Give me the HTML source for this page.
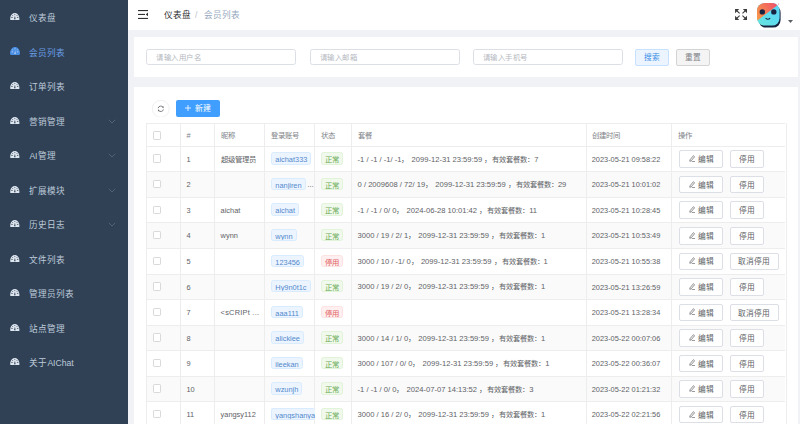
<!DOCTYPE html><html lang="zh-CN"><head><meta charset="utf-8"><style>
*{margin:0;padding:0;box-sizing:border-box}
html,body{width:800px;height:424px;overflow:hidden;background:#f0f2f5;font-family:"Liberation Sans", sans-serif;}
.abs{position:absolute}
.side{position:absolute;left:0;top:0;width:127.5px;height:424px;background:#304156}
.mi{position:absolute;left:0;width:127.5px;height:34.5px;}
.mt{position:absolute;left:29.4px;font-size:8.6px;line-height:10px;color:#bfcbd9;white-space:nowrap}
.hdr{position:absolute;left:127.5px;top:0;width:672.5px;height:30px;background:#fff;}
.card{position:absolute;left:134.4px;width:663.6px;background:#fff}
.inp{position:absolute;top:48.5px;height:16.8px;width:150px;border:0.6px solid #dcdfe6;border-radius:2.5px;background:#fff}
.ph{position:absolute;left:9.3px;top:3.4px;font-size:7.4px;letter-spacing:0.45px;line-height:9px;color:#b4b8c0;white-space:nowrap}
.btn{position:absolute;height:17px;border-radius:2px;font-size:7.4px;line-height:9px;text-align:center;white-space:nowrap}
.vl{position:absolute;width:0.6px;background:#ededed}
.hl{position:absolute;height:0.6px;background:#ededed}
.ct{position:absolute;font-size:7.4px;line-height:9px;color:#606266;white-space:nowrap}
.th{position:absolute;font-size:7.4px;line-height:9px;color:#808388;letter-spacing:0.2px;white-space:nowrap}
.tag{position:absolute;height:12.3px;border:0.6px solid;border-radius:2.5px;font-size:7.4px;line-height:13.6px;padding:0 3px;white-space:nowrap;overflow:hidden}
.tb{background:#ecf5ff;border-color:#d9ecff;color:#5288cc}
.tg{background:#f0f9eb;border-color:#e1f3d8;color:#6aaa58}
.tr{background:#fef0f0;border-color:#fde2e2;color:#e26464}
.ob{position:absolute;height:17.6px;border:0.6px solid #dcdfe6;border-radius:2px;background:#fff;font-size:7.7px;line-height:16px;color:#606266;text-align:center;white-space:nowrap}
.cb{position:absolute;width:8.4px;height:8.4px;border:0.6px solid #d9d9d9;border-radius:1.2px;background:#fff}
</style></head><body>

<div class="side">
<div class="mi" style="top:0.0px">
<svg style="position:absolute;left:10.3px;top:13.1px" width="9.6" height="7.1" viewBox="0 0 10 7.2">
<path d="M0.3 7.1 C-0.2 3.2 2 0 5 0 C8 0 10.2 3.2 9.7 7.1 Z" fill="#dde5ef"/>
<g stroke="#304156" stroke-width="0.8" fill="none"><path d="M1.2 4.4 L2.8 4.6 M7.2 4.6 L8.8 4.4 M2.2 2.0 L3.0 2.8 M7.8 2.0 L7.0 2.8 M5 0.8 L5 1.9"/></g>
<path d="M4.2 6.5 L5.8 6.5 L5.2 2.6 Z" fill="#304156"/>
</svg>
<div class="mt" style="top:13.3px;color:#bfcbd9">仪表盘</div>
</div>
<div class="mi" style="top:34.5px">
<svg style="position:absolute;left:10.2px;top:12.3px" width="10" height="8.6" viewBox="0 0 10 8.6"><path d="M0.2 7.6 C-0.6 3.5 2 0 5 0 C8 0 10.6 3.5 9.8 7.6 C8 8.8 2 8.8 0.2 7.6 Z" fill="#4a8fe6"/><g stroke="#c8dcf5" stroke-width="0.8" fill="none"><path d="M1.6 4.8 L3 5 M7 5 L8.4 4.8 M2.4 2.6 L3.2 3.3 M7.6 2.6 L6.8 3.3 M5 1.3 L5 2.4"/></g><path d="M4.3 7 L5.7 7 L5.2 3.2 Z" fill="#c8dcf5"/></svg>
<div class="mt" style="top:13.3px;color:#6a9fe6">会员列表</div>
</div>
<div class="mi" style="top:69.0px">
<svg style="position:absolute;left:10.3px;top:13.1px" width="9.6" height="7.1" viewBox="0 0 10 7.2">
<path d="M0.3 7.1 C-0.2 3.2 2 0 5 0 C8 0 10.2 3.2 9.7 7.1 Z" fill="#dde5ef"/>
<g stroke="#304156" stroke-width="0.8" fill="none"><path d="M1.2 4.4 L2.8 4.6 M7.2 4.6 L8.8 4.4 M2.2 2.0 L3.0 2.8 M7.8 2.0 L7.0 2.8 M5 0.8 L5 1.9"/></g>
<path d="M4.2 6.5 L5.8 6.5 L5.2 2.6 Z" fill="#304156"/>
</svg>
<div class="mt" style="top:13.3px;color:#bfcbd9">订单列表</div>
</div>
<div class="mi" style="top:103.5px">
<svg style="position:absolute;left:10.3px;top:13.1px" width="9.6" height="7.1" viewBox="0 0 10 7.2">
<path d="M0.3 7.1 C-0.2 3.2 2 0 5 0 C8 0 10.2 3.2 9.7 7.1 Z" fill="#dde5ef"/>
<g stroke="#304156" stroke-width="0.8" fill="none"><path d="M1.2 4.4 L2.8 4.6 M7.2 4.6 L8.8 4.4 M2.2 2.0 L3.0 2.8 M7.8 2.0 L7.0 2.8 M5 0.8 L5 1.9"/></g>
<path d="M4.2 6.5 L5.8 6.5 L5.2 2.6 Z" fill="#304156"/>
</svg>
<div class="mt" style="top:13.3px;color:#bfcbd9">营销管理</div>
<svg style="position:absolute;left:107.5px;top:15px" width="8" height="5" viewBox="0 0 8 5"><path d="M0.8 0.8 L4 4 L7.2 0.8" fill="none" stroke="#bfcbd9" stroke-opacity="0.35" stroke-width="0.7"/></svg>
</div>
<div class="mi" style="top:138.0px">
<svg style="position:absolute;left:10.3px;top:13.1px" width="9.6" height="7.1" viewBox="0 0 10 7.2">
<path d="M0.3 7.1 C-0.2 3.2 2 0 5 0 C8 0 10.2 3.2 9.7 7.1 Z" fill="#dde5ef"/>
<g stroke="#304156" stroke-width="0.8" fill="none"><path d="M1.2 4.4 L2.8 4.6 M7.2 4.6 L8.8 4.4 M2.2 2.0 L3.0 2.8 M7.8 2.0 L7.0 2.8 M5 0.8 L5 1.9"/></g>
<path d="M4.2 6.5 L5.8 6.5 L5.2 2.6 Z" fill="#304156"/>
</svg>
<div class="mt" style="top:13.3px;color:#bfcbd9">AI管理</div>
<svg style="position:absolute;left:107.5px;top:15px" width="8" height="5" viewBox="0 0 8 5"><path d="M0.8 0.8 L4 4 L7.2 0.8" fill="none" stroke="#bfcbd9" stroke-opacity="0.35" stroke-width="0.7"/></svg>
</div>
<div class="mi" style="top:172.5px">
<svg style="position:absolute;left:10.3px;top:13.1px" width="9.6" height="7.1" viewBox="0 0 10 7.2">
<path d="M0.3 7.1 C-0.2 3.2 2 0 5 0 C8 0 10.2 3.2 9.7 7.1 Z" fill="#dde5ef"/>
<g stroke="#304156" stroke-width="0.8" fill="none"><path d="M1.2 4.4 L2.8 4.6 M7.2 4.6 L8.8 4.4 M2.2 2.0 L3.0 2.8 M7.8 2.0 L7.0 2.8 M5 0.8 L5 1.9"/></g>
<path d="M4.2 6.5 L5.8 6.5 L5.2 2.6 Z" fill="#304156"/>
</svg>
<div class="mt" style="top:13.3px;color:#bfcbd9">扩展模块</div>
<svg style="position:absolute;left:107.5px;top:15px" width="8" height="5" viewBox="0 0 8 5"><path d="M0.8 0.8 L4 4 L7.2 0.8" fill="none" stroke="#bfcbd9" stroke-opacity="0.35" stroke-width="0.7"/></svg>
</div>
<div class="mi" style="top:207.0px">
<svg style="position:absolute;left:10.3px;top:13.1px" width="9.6" height="7.1" viewBox="0 0 10 7.2">
<path d="M0.3 7.1 C-0.2 3.2 2 0 5 0 C8 0 10.2 3.2 9.7 7.1 Z" fill="#dde5ef"/>
<g stroke="#304156" stroke-width="0.8" fill="none"><path d="M1.2 4.4 L2.8 4.6 M7.2 4.6 L8.8 4.4 M2.2 2.0 L3.0 2.8 M7.8 2.0 L7.0 2.8 M5 0.8 L5 1.9"/></g>
<path d="M4.2 6.5 L5.8 6.5 L5.2 2.6 Z" fill="#304156"/>
</svg>
<div class="mt" style="top:13.3px;color:#bfcbd9">历史日志</div>
<svg style="position:absolute;left:107.5px;top:15px" width="8" height="5" viewBox="0 0 8 5"><path d="M0.8 0.8 L4 4 L7.2 0.8" fill="none" stroke="#bfcbd9" stroke-opacity="0.35" stroke-width="0.7"/></svg>
</div>
<div class="mi" style="top:241.5px">
<svg style="position:absolute;left:10.3px;top:13.1px" width="9.6" height="7.1" viewBox="0 0 10 7.2">
<path d="M0.3 7.1 C-0.2 3.2 2 0 5 0 C8 0 10.2 3.2 9.7 7.1 Z" fill="#dde5ef"/>
<g stroke="#304156" stroke-width="0.8" fill="none"><path d="M1.2 4.4 L2.8 4.6 M7.2 4.6 L8.8 4.4 M2.2 2.0 L3.0 2.8 M7.8 2.0 L7.0 2.8 M5 0.8 L5 1.9"/></g>
<path d="M4.2 6.5 L5.8 6.5 L5.2 2.6 Z" fill="#304156"/>
</svg>
<div class="mt" style="top:13.3px;color:#bfcbd9">文件列表</div>
</div>
<div class="mi" style="top:276.0px">
<svg style="position:absolute;left:10.3px;top:13.1px" width="9.6" height="7.1" viewBox="0 0 10 7.2">
<path d="M0.3 7.1 C-0.2 3.2 2 0 5 0 C8 0 10.2 3.2 9.7 7.1 Z" fill="#dde5ef"/>
<g stroke="#304156" stroke-width="0.8" fill="none"><path d="M1.2 4.4 L2.8 4.6 M7.2 4.6 L8.8 4.4 M2.2 2.0 L3.0 2.8 M7.8 2.0 L7.0 2.8 M5 0.8 L5 1.9"/></g>
<path d="M4.2 6.5 L5.8 6.5 L5.2 2.6 Z" fill="#304156"/>
</svg>
<div class="mt" style="top:13.3px;color:#bfcbd9">管理员列表</div>
</div>
<div class="mi" style="top:310.5px">
<svg style="position:absolute;left:10.3px;top:13.1px" width="9.6" height="7.1" viewBox="0 0 10 7.2">
<path d="M0.3 7.1 C-0.2 3.2 2 0 5 0 C8 0 10.2 3.2 9.7 7.1 Z" fill="#dde5ef"/>
<g stroke="#304156" stroke-width="0.8" fill="none"><path d="M1.2 4.4 L2.8 4.6 M7.2 4.6 L8.8 4.4 M2.2 2.0 L3.0 2.8 M7.8 2.0 L7.0 2.8 M5 0.8 L5 1.9"/></g>
<path d="M4.2 6.5 L5.8 6.5 L5.2 2.6 Z" fill="#304156"/>
</svg>
<div class="mt" style="top:13.3px;color:#bfcbd9">站点管理</div>
</div>
<div class="mi" style="top:345.0px">
<svg style="position:absolute;left:10.3px;top:13.1px" width="9.6" height="7.1" viewBox="0 0 10 7.2">
<path d="M0.3 7.1 C-0.2 3.2 2 0 5 0 C8 0 10.2 3.2 9.7 7.1 Z" fill="#dde5ef"/>
<g stroke="#304156" stroke-width="0.8" fill="none"><path d="M1.2 4.4 L2.8 4.6 M7.2 4.6 L8.8 4.4 M2.2 2.0 L3.0 2.8 M7.8 2.0 L7.0 2.8 M5 0.8 L5 1.9"/></g>
<path d="M4.2 6.5 L5.8 6.5 L5.2 2.6 Z" fill="#304156"/>
</svg>
<div class="mt" style="top:13.3px;color:#bfcbd9">关于AIChat</div>
</div>
</div>
<div class="hdr">
</div>
<svg style="position:absolute;left:138.2px;top:9.7px" width="10.1" height="9" viewBox="0 0 10.1 9">
<rect x="0" y="0" width="10.1" height="1.1" fill="#303133"/>
<rect x="0" y="3.9" width="7" height="1.1" fill="#303133"/>
<rect x="0" y="7.9" width="10.1" height="1.1" fill="#303133"/>
<path d="M10.1 2.5 L7.8 4.45 L10.1 6.4 Z" fill="#303133"/>
</svg>
<div class="abs" style="left:163.7px;top:9.5px;font-size:8.6px;line-height:10px;color:#303133;white-space:nowrap">仪表盘</div>
<div class="abs" style="left:195px;top:9.5px;font-size:8.6px;line-height:10px;color:#c0c4cc;white-space:nowrap">/</div>
<div class="abs" style="left:204.2px;top:9.5px;font-size:8.6px;line-height:10px;color:#97a8be;white-space:nowrap">会员列表</div>
<svg style="position:absolute;left:735.2px;top:8.8px" width="12.1" height="11" viewBox="0 0 12 11">
<g fill="#3c3c3c">
<path d="M0 0 L4.2 0 L0 4.2 Z"/><path d="M12 0 L7.8 0 L12 4.2 Z"/>
<path d="M0 11 L4.2 11 L0 6.8 Z"/><path d="M12 11 L7.8 11 L12 6.8 Z"/>
</g>
<g stroke="#3c3c3c" stroke-width="1.1">
<path d="M1 1 L4.6 4.3 M11 1 L7.4 4.3 M1 10 L4.6 6.7 M11 10 L7.4 6.7"/>
</g></svg>
<svg style="position:absolute;left:754px;top:1px" width="30" height="28" viewBox="0 0 30 28">
<defs><linearGradient id="ga" x1="0" y1="0.6" x2="1" y2="0.2"><stop offset="0" stop-color="#f89a46"/><stop offset="0.55" stop-color="#f26a5c"/><stop offset="1" stop-color="#ee4272"/></linearGradient>
<linearGradient id="gb" x1="0" y1="1" x2="1" y2="0"><stop offset="0" stop-color="#6ee6d6"/><stop offset="0.5" stop-color="#5edcef"/><stop offset="1" stop-color="#58d2f6"/></linearGradient>
<clipPath id="cp"><rect x="3" y="2" width="22.6" height="22.6" rx="7.5"/></clipPath></defs>
<rect x="4.6" y="4.0" width="22" height="22.6" rx="7.5" fill="#17233f"/>
<g clip-path="url(#cp)">
<rect x="0" y="0" width="30" height="28" fill="url(#gb)"/>
<path d="M0 0 H29 L0 22 Z" fill="url(#ga)"/>
</g>
<circle cx="8.3" cy="10.9" r="2.7" fill="#17233f"/>
<circle cx="19.8" cy="10.9" r="2.7" fill="#17233f"/>
<path d="M11.6 17.2 Q13.9 19.3 16.2 17.2" stroke="#17233f" stroke-width="1.1" fill="none"/>
<circle cx="24.6" cy="3" r="0.5" fill="#e06070"/>
</svg>
<svg style="position:absolute;left:787.5px;top:20px" width="5" height="3" viewBox="0 0 5 3"><path d="M0 0 H5 L2.5 3 Z" fill="#5a5e66"/></svg>
<div class="card" style="top:36.5px;height:40.9px"></div>
<div class="inp" style="left:146.2px"><div class="ph">请输入用户名</div></div>
<div class="inp" style="left:309.5px"><div class="ph">请输入邮箱</div></div>
<div class="inp" style="left:472.5px"><div class="ph">请输入手机号</div></div>
<div class="btn" style="left:635.4px;top:48.5px;width:34px;height:17.2px;background:#ecf5ff;border:0.6px solid #c6e2ff;color:#3a8ee6;padding-top:3.7px;font-size:7.7px">搜索</div>
<div class="btn" style="left:676.3px;top:48.5px;width:34px;height:17.2px;background:#f4f4f5;border:0.6px solid #d3d4d6;color:#808287;padding-top:3.7px;font-size:7.7px">重置</div>
<div class="card" style="top:87.1px;height:340px"></div>
<svg style="position:absolute;left:152px;top:99.7px" width="17.6" height="17.6" viewBox="0 0 17.6 17.6">
<circle cx="8.8" cy="8.8" r="8.5" fill="#fff" stroke="#e6e6e6" stroke-width="0.6"/>
<g stroke="#606266" stroke-width="0.8" fill="none">
<path d="M6.1 8.2 A2.8 2.8 0 0 1 11.2 7.4"/>
<path d="M11.5 9.4 A2.8 2.8 0 0 1 6.4 10.2"/>
</g>
<path d="M11.7 6.2 L11.6 8 L10 7.3 Z" fill="#606266"/>
<path d="M5.9 11.4 L6 9.6 L7.6 10.3 Z" fill="#606266"/>
</svg>
<div class="btn" style="left:176px;top:100px;width:44.2px;height:17px;background:#409eff;color:#fff;padding-top:4px"><svg style="position:relative;top:0.3px;margin-right:3.5px" width="6" height="6" viewBox="0 0 6 6"><path d="M3 0 V6 M0 3 H6" stroke="#fff" stroke-width="0.8"/></svg><span style="font-size:7.9px">新建</span></div>
<div class="abs" style="left:146.4px;top:171.3px;width:639.1px;height:25.55px;background:#fafafa"></div>
<div class="abs" style="left:146.4px;top:222.4px;width:639.1px;height:25.55px;background:#fafafa"></div>
<div class="abs" style="left:146.4px;top:273.5px;width:639.1px;height:25.55px;background:#fafafa"></div>
<div class="abs" style="left:146.4px;top:324.6px;width:639.1px;height:25.55px;background:#fafafa"></div>
<div class="abs" style="left:146.4px;top:375.70000000000005px;width:639.1px;height:25.55px;background:#fafafa"></div>
<div class="hl" style="left:146.4px;top:123.25px;width:639.1px"></div>
<div class="hl" style="left:146.4px;top:145.75px;width:639.1px"></div>
<div class="hl" style="left:146.4px;top:171.3px;width:639.1px"></div>
<div class="hl" style="left:146.4px;top:196.85px;width:639.1px"></div>
<div class="hl" style="left:146.4px;top:222.4px;width:639.1px"></div>
<div class="hl" style="left:146.4px;top:247.95px;width:639.1px"></div>
<div class="hl" style="left:146.4px;top:273.5px;width:639.1px"></div>
<div class="hl" style="left:146.4px;top:299.05px;width:639.1px"></div>
<div class="hl" style="left:146.4px;top:324.6px;width:639.1px"></div>
<div class="hl" style="left:146.4px;top:350.15px;width:639.1px"></div>
<div class="hl" style="left:146.4px;top:375.70000000000005px;width:639.1px"></div>
<div class="hl" style="left:146.4px;top:401.25px;width:639.1px"></div>
<div class="hl" style="left:146.4px;top:426.8px;width:639.1px"></div>
<div class="vl" style="left:146.4px;top:123.25px;height:300.75px"></div>
<div class="vl" style="left:180.1px;top:123.25px;height:300.75px"></div>
<div class="vl" style="left:214.4px;top:123.25px;height:300.75px"></div>
<div class="vl" style="left:264.4px;top:123.25px;height:300.75px"></div>
<div class="vl" style="left:314.4px;top:123.25px;height:300.75px"></div>
<div class="vl" style="left:351.4px;top:123.25px;height:300.75px"></div>
<div class="vl" style="left:585.5px;top:123.25px;height:300.75px"></div>
<div class="vl" style="left:671.25px;top:123.25px;height:300.75px"></div>
<div class="vl" style="left:785.5px;top:123.25px;height:300.75px"></div>
<div class="cb" style="left:152.9px;top:131.2px"></div>
<div class="th" style="left:186.5px;top:130.85px">#</div>
<div class="th" style="left:220.6px;top:130.85px">昵称</div>
<div class="th" style="left:270.6px;top:130.85px">登录账号</div>
<div class="th" style="left:320.6px;top:130.85px">状态</div>
<div class="th" style="left:357.6px;top:130.85px">套餐</div>
<div class="th" style="left:591.7px;top:130.85px">创建时间</div>
<div class="th" style="left:677.5px;top:130.85px">操作</div>
<div class="cb" style="left:153.1px;top:154.425px"></div>
<div class="ct" style="left:186.5px;top:154.82500000000002px">1</div>
<div class="ct" style="left:220.6px;top:154.82500000000002px">超级管理员</div>
<div class="tag tb" style="left:271.3px;top:152.375px;">aichat333</div>
<div class="tag tg" style="left:321.4px;top:152.375px">正常</div>
<div class="ct" style="left:357.6px;top:154.725px;font-size:7.6px">-1 / -1 / -1/ -1， 2099-12-31 23:59:59 ，<span style="font-size:7.25px">有效套餐数：</span>7</div>
<div class="ct" style="left:591.7px;top:154.82500000000002px">2023-05-21 09:58:22</div>
<div class="ob" style="left:678.5px;top:150.32500000000002px;width:44.3px;padding-top:0.9px"><svg style="position:relative;top:-0.2px;margin-right:3px;margin-left:1.5px" width="6.5" height="7" viewBox="0 0 6.5 7"><path d="M0.8 6.3 L1.0 4.8 L4.4 0.7 L5.6 1.7 L2.2 5.8 Z" fill="none" stroke="#606266" stroke-width="0.7"/><path d="M2.8 6.5 H6.3" stroke="#606266" stroke-width="0.65"/></svg>编辑</div>
<div class="ob" style="left:729.5px;top:150.32500000000002px;width:34px;padding-top:0.9px">停用</div>
<div class="cb" style="left:153.1px;top:179.97500000000002px"></div>
<div class="ct" style="left:186.5px;top:180.37500000000003px">2</div>
<div class="tag tb" style="left:271.3px;top:177.925px;">nanjiren</div>
<div class="ct" style="left:307.5px;top:180.37500000000003px;color:#606266">...</div>
<div class="tag tg" style="left:321.4px;top:177.925px">正常</div>
<div class="ct" style="left:357.6px;top:180.275px;font-size:7.6px">0 / 2009608 / 72/ 19， 2099-12-31 23:59:59 ，<span style="font-size:7.25px">有效套餐数：</span>29</div>
<div class="ct" style="left:591.7px;top:180.37500000000003px">2023-05-21 10:01:02</div>
<div class="ob" style="left:678.5px;top:175.87500000000003px;width:44.3px;padding-top:0.9px"><svg style="position:relative;top:-0.2px;margin-right:3px;margin-left:1.5px" width="6.5" height="7" viewBox="0 0 6.5 7"><path d="M0.8 6.3 L1.0 4.8 L4.4 0.7 L5.6 1.7 L2.2 5.8 Z" fill="none" stroke="#606266" stroke-width="0.7"/><path d="M2.8 6.5 H6.3" stroke="#606266" stroke-width="0.65"/></svg>编辑</div>
<div class="ob" style="left:729.5px;top:175.87500000000003px;width:34px;padding-top:0.9px">停用</div>
<div class="cb" style="left:153.1px;top:205.525px"></div>
<div class="ct" style="left:186.5px;top:205.925px">3</div>
<div class="ct" style="left:220.6px;top:205.925px">aichat</div>
<div class="tag tb" style="left:271.3px;top:203.475px;">aichat</div>
<div class="tag tg" style="left:321.4px;top:203.475px">正常</div>
<div class="ct" style="left:357.6px;top:205.825px;font-size:7.6px">-1 / -1 / 0/ 0， 2024-06-28 10:01:42 ，<span style="font-size:7.25px">有效套餐数：</span>11</div>
<div class="ct" style="left:591.7px;top:205.925px">2023-05-21 10:28:45</div>
<div class="ob" style="left:678.5px;top:201.425px;width:44.3px;padding-top:0.9px"><svg style="position:relative;top:-0.2px;margin-right:3px;margin-left:1.5px" width="6.5" height="7" viewBox="0 0 6.5 7"><path d="M0.8 6.3 L1.0 4.8 L4.4 0.7 L5.6 1.7 L2.2 5.8 Z" fill="none" stroke="#606266" stroke-width="0.7"/><path d="M2.8 6.5 H6.3" stroke="#606266" stroke-width="0.65"/></svg>编辑</div>
<div class="ob" style="left:729.5px;top:201.425px;width:34px;padding-top:0.9px">停用</div>
<div class="cb" style="left:153.1px;top:231.07500000000002px"></div>
<div class="ct" style="left:186.5px;top:231.47500000000002px">4</div>
<div class="ct" style="left:220.6px;top:231.47500000000002px">wynn</div>
<div class="tag tb" style="left:271.3px;top:229.025px;">wynn</div>
<div class="tag tg" style="left:321.4px;top:229.025px">正常</div>
<div class="ct" style="left:357.6px;top:231.375px;font-size:7.6px">3000 / 19 / 2/ 1， 2099-12-31 23:59:59 ，<span style="font-size:7.25px">有效套餐数：</span>1</div>
<div class="ct" style="left:591.7px;top:231.47500000000002px">2023-05-21 10:53:49</div>
<div class="ob" style="left:678.5px;top:226.97500000000002px;width:44.3px;padding-top:0.9px"><svg style="position:relative;top:-0.2px;margin-right:3px;margin-left:1.5px" width="6.5" height="7" viewBox="0 0 6.5 7"><path d="M0.8 6.3 L1.0 4.8 L4.4 0.7 L5.6 1.7 L2.2 5.8 Z" fill="none" stroke="#606266" stroke-width="0.7"/><path d="M2.8 6.5 H6.3" stroke="#606266" stroke-width="0.65"/></svg>编辑</div>
<div class="ob" style="left:729.5px;top:226.97500000000002px;width:34px;padding-top:0.9px">停用</div>
<div class="cb" style="left:153.1px;top:256.62499999999994px"></div>
<div class="ct" style="left:186.5px;top:257.025px">5</div>
<div class="tag tb" style="left:271.3px;top:254.57499999999996px;">123456</div>
<div class="tag tr" style="left:321.4px;top:254.57499999999996px">停用</div>
<div class="ct" style="left:357.6px;top:256.92499999999995px;font-size:7.6px">3000 / 10 / -1/ 0， 2099-12-31 23:59:59 ，<span style="font-size:7.25px">有效套餐数：</span>1</div>
<div class="ct" style="left:591.7px;top:257.025px">2023-05-21 10:55:38</div>
<div class="ob" style="left:678.5px;top:252.52499999999998px;width:44.3px;padding-top:0.9px"><svg style="position:relative;top:-0.2px;margin-right:3px;margin-left:1.5px" width="6.5" height="7" viewBox="0 0 6.5 7"><path d="M0.8 6.3 L1.0 4.8 L4.4 0.7 L5.6 1.7 L2.2 5.8 Z" fill="none" stroke="#606266" stroke-width="0.7"/><path d="M2.8 6.5 H6.3" stroke="#606266" stroke-width="0.65"/></svg>编辑</div>
<div class="ob" style="left:729.5px;top:252.52499999999998px;width:49.5px;padding-top:0.9px">取消停用</div>
<div class="cb" style="left:153.1px;top:282.17499999999995px"></div>
<div class="ct" style="left:186.5px;top:282.575px">6</div>
<div class="tag tb" style="left:271.3px;top:280.125px;">Hy9n0t1c</div>
<div class="tag tg" style="left:321.4px;top:280.125px">正常</div>
<div class="ct" style="left:357.6px;top:282.47499999999997px;font-size:7.6px">3000 / 19 / 2/ 0， 2099-12-31 23:59:59 ，<span style="font-size:7.25px">有效套餐数：</span>1</div>
<div class="ct" style="left:591.7px;top:282.575px">2023-05-21 13:26:59</div>
<div class="ob" style="left:678.5px;top:278.075px;width:44.3px;padding-top:0.9px"><svg style="position:relative;top:-0.2px;margin-right:3px;margin-left:1.5px" width="6.5" height="7" viewBox="0 0 6.5 7"><path d="M0.8 6.3 L1.0 4.8 L4.4 0.7 L5.6 1.7 L2.2 5.8 Z" fill="none" stroke="#606266" stroke-width="0.7"/><path d="M2.8 6.5 H6.3" stroke="#606266" stroke-width="0.65"/></svg>编辑</div>
<div class="ob" style="left:729.5px;top:278.075px;width:34px;padding-top:0.9px">停用</div>
<div class="cb" style="left:153.1px;top:307.72499999999997px"></div>
<div class="ct" style="left:186.5px;top:308.125px">7</div>
<div class="ct" style="left:220.6px;top:308.125px"><span style="letter-spacing:0.25px">&lt;sCRIPt ...</span></div>
<div class="tag tb" style="left:271.3px;top:305.675px;">aaa111</div>
<div class="tag tr" style="left:321.4px;top:305.675px">停用</div>
<div class="ct" style="left:591.7px;top:308.125px">2023-05-21 13:28:34</div>
<div class="ob" style="left:678.5px;top:303.625px;width:44.3px;padding-top:0.9px"><svg style="position:relative;top:-0.2px;margin-right:3px;margin-left:1.5px" width="6.5" height="7" viewBox="0 0 6.5 7"><path d="M0.8 6.3 L1.0 4.8 L4.4 0.7 L5.6 1.7 L2.2 5.8 Z" fill="none" stroke="#606266" stroke-width="0.7"/><path d="M2.8 6.5 H6.3" stroke="#606266" stroke-width="0.65"/></svg>编辑</div>
<div class="ob" style="left:729.5px;top:303.625px;width:49.5px;padding-top:0.9px">取消停用</div>
<div class="cb" style="left:153.1px;top:333.275px"></div>
<div class="ct" style="left:186.5px;top:333.675px">8</div>
<div class="tag tb" style="left:271.3px;top:331.225px;">alicklee</div>
<div class="tag tg" style="left:321.4px;top:331.225px">正常</div>
<div class="ct" style="left:357.6px;top:333.575px;font-size:7.6px">3000 / 14 / 1/ 0， 2099-12-31 23:59:59 ，<span style="font-size:7.25px">有效套餐数：</span>1</div>
<div class="ct" style="left:591.7px;top:333.675px">2023-05-22 00:07:06</div>
<div class="ob" style="left:678.5px;top:329.175px;width:44.3px;padding-top:0.9px"><svg style="position:relative;top:-0.2px;margin-right:3px;margin-left:1.5px" width="6.5" height="7" viewBox="0 0 6.5 7"><path d="M0.8 6.3 L1.0 4.8 L4.4 0.7 L5.6 1.7 L2.2 5.8 Z" fill="none" stroke="#606266" stroke-width="0.7"/><path d="M2.8 6.5 H6.3" stroke="#606266" stroke-width="0.65"/></svg>编辑</div>
<div class="ob" style="left:729.5px;top:329.175px;width:34px;padding-top:0.9px">停用</div>
<div class="cb" style="left:153.1px;top:358.82499999999993px"></div>
<div class="ct" style="left:186.5px;top:359.22499999999997px">9</div>
<div class="tag tb" style="left:271.3px;top:356.775px;">ileekan</div>
<div class="tag tg" style="left:321.4px;top:356.775px">正常</div>
<div class="ct" style="left:357.6px;top:359.12499999999994px;font-size:7.6px">3000 / 107 / 0/ 0， 2099-12-31 23:59:59 ，<span style="font-size:7.25px">有效套餐数：</span>1</div>
<div class="ct" style="left:591.7px;top:359.22499999999997px">2023-05-22 00:36:07</div>
<div class="ob" style="left:678.5px;top:354.72499999999997px;width:44.3px;padding-top:0.9px"><svg style="position:relative;top:-0.2px;margin-right:3px;margin-left:1.5px" width="6.5" height="7" viewBox="0 0 6.5 7"><path d="M0.8 6.3 L1.0 4.8 L4.4 0.7 L5.6 1.7 L2.2 5.8 Z" fill="none" stroke="#606266" stroke-width="0.7"/><path d="M2.8 6.5 H6.3" stroke="#606266" stroke-width="0.65"/></svg>编辑</div>
<div class="ob" style="left:729.5px;top:354.72499999999997px;width:34px;padding-top:0.9px">停用</div>
<div class="cb" style="left:153.1px;top:384.375px"></div>
<div class="ct" style="left:186.5px;top:384.77500000000003px">10</div>
<div class="tag tb" style="left:271.3px;top:382.32500000000005px;">wzunjh</div>
<div class="tag tg" style="left:321.4px;top:382.32500000000005px">正常</div>
<div class="ct" style="left:357.6px;top:384.675px;font-size:7.6px">-1 / -1 / 0/ 0， 2024-07-07 14:13:52 ，<span style="font-size:7.25px">有效套餐数：</span>3</div>
<div class="ct" style="left:591.7px;top:384.77500000000003px">2023-05-22 01:21:32</div>
<div class="ob" style="left:678.5px;top:380.27500000000003px;width:44.3px;padding-top:0.9px"><svg style="position:relative;top:-0.2px;margin-right:3px;margin-left:1.5px" width="6.5" height="7" viewBox="0 0 6.5 7"><path d="M0.8 6.3 L1.0 4.8 L4.4 0.7 L5.6 1.7 L2.2 5.8 Z" fill="none" stroke="#606266" stroke-width="0.7"/><path d="M2.8 6.5 H6.3" stroke="#606266" stroke-width="0.65"/></svg>编辑</div>
<div class="ob" style="left:729.5px;top:380.27500000000003px;width:34px;padding-top:0.9px">停用</div>
<div class="cb" style="left:153.1px;top:409.92499999999995px"></div>
<div class="ct" style="left:186.5px;top:410.325px">11</div>
<div class="ct" style="left:220.6px;top:410.325px">yangsy112</div>
<div class="tag tb" style="left:271.3px;top:407.875px;width:43.5px;border-right:none;">yangshanya</div>
<div class="tag tg" style="left:321.4px;top:407.875px">正常</div>
<div class="ct" style="left:357.6px;top:410.22499999999997px;font-size:7.6px">3000 / 16 / 2/ 0， 2099-12-31 23:59:59 ，<span style="font-size:7.25px">有效套餐数：</span>1</div>
<div class="ct" style="left:591.7px;top:410.325px">2023-05-22 02:21:56</div>
<div class="ob" style="left:678.5px;top:405.825px;width:44.3px;padding-top:0.9px"><svg style="position:relative;top:-0.2px;margin-right:3px;margin-left:1.5px" width="6.5" height="7" viewBox="0 0 6.5 7"><path d="M0.8 6.3 L1.0 4.8 L4.4 0.7 L5.6 1.7 L2.2 5.8 Z" fill="none" stroke="#606266" stroke-width="0.7"/><path d="M2.8 6.5 H6.3" stroke="#606266" stroke-width="0.65"/></svg>编辑</div>
<div class="ob" style="left:729.5px;top:405.825px;width:34px;padding-top:0.9px">停用</div>
</body></html>
